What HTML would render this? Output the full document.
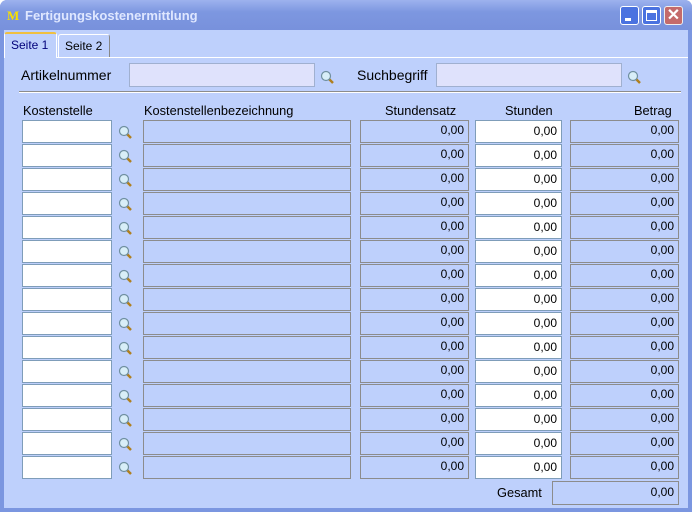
<!DOCTYPE html><html><head><style>
body{margin:0;width:692px;height:512px;overflow:hidden;font-family:"Liberation Sans",sans-serif;font-size:12px;}
.win{position:absolute;left:0;top:0;width:692px;height:512px;background:#7b96e0;border-radius:7px 7px 0 0;}
.title{position:absolute;left:0;top:0;width:692px;height:30px;border-radius:7px 7px 0 0;background:linear-gradient(#9db2ee,#7d97e0 40%,#7891dc);}
.title span{position:absolute;left:25px;top:8px;color:#dfe7ff;font-weight:bold;font-size:13px;}
.logo{position:absolute;left:7px;top:8px;color:#f8e000;font-weight:bold;font-family:"Liberation Serif",serif;font-size:13px;}
.btn{position:absolute;top:6px;width:19px;height:19px;border:1px solid #fff;border-radius:3px;background:#4a72e0;color:#fff;box-sizing:border-box}
.client{position:absolute;left:4px;top:30px;width:684px;height:478px;background:#bed0fc;}
.a{position:absolute;box-sizing:border-box;}
.ro{background:#bed0fc;border:1px solid #8c8c8c;text-align:right;padding:2px 4px 0 0;height:23px}
.wh{background:#fff;border:1px solid #7f9db9;text-align:right;padding:3px 4px 0 0;height:23px}
.in{background:#dfe2fc;border:1px solid #a0b0d0;height:24px}
.lbl{position:absolute;font-size:12.8px;color:#000}
.mg{position:absolute;width:14px;height:14px}
</style></head><body><div class="win">
<div class="title"><b class="logo">M</b><span>Fertigungskostenermittlung</span>
<div class="btn" style="left:620px"><div style="position:absolute;left:4px;top:11px;width:6px;height:3px;background:#fff"></div></div>
<div class="btn" style="left:642px"><div style="position:absolute;left:3px;top:3px;width:11px;height:11px;border:1px solid #fff;border-top-width:3px;box-sizing:border-box"></div></div>
<div class="btn" style="left:664px;background:#c46a6a;border-color:#eee;font-size:16px;line-height:17px;text-align:center;font-weight:bold">✕</div>
</div>
<div class="client"></div>
<div class="a" style="left:4px;top:32px;width:53px;height:26px;background:#bed0fc;border:1px solid #fff;border-bottom:none;border-top:2px solid #f0c040;border-radius:3px 3px 0 0;color:#00007a;padding:4px 0 0 6px">Seite 1</div>
<div class="a" style="left:58px;top:34px;width:52px;height:23px;background:#bed0fc;border:1px solid #fff;border-right-color:#888;border-bottom:none;border-radius:3px 3px 0 0;padding:4px 0 0 6px">Seite 2</div>
<div class="a" style="left:57px;top:57px;width:631px;height:1px;background:#fff"></div>
<div class="lbl" style="left:21px;top:67px;font-size:14px">Artikelnummer</div>
<div class="a in" style="left:129px;top:63px;width:186px"></div>
<div class="lbl" style="left:357px;top:67px;font-size:14px">Suchbegriff</div>
<div class="a in" style="left:436px;top:63px;width:186px"></div>
<div class="a" style="left:19px;top:91px;width:662px;height:2px;background:#8c8c8c;border-bottom:1px solid #fff"></div>
<div class="lbl" style="left:23px;top:103px">Kostenstelle</div>
<div class="lbl" style="left:144px;top:103px">Kostenstellenbezeichnung</div>
<div class="lbl" style="left:385px;top:103px">Stundensatz</div>
<div class="lbl" style="left:505px;top:103px">Stunden</div>
<div class="lbl" style="left:634px;top:103px">Betrag</div>
<div id="rows"></div>
<div class="lbl" style="left:497px;top:485px">Gesamt</div>
<div class="a ro" style="left:552px;top:481px;width:127px;height:24px;padding-top:3px">0,00</div>
</div>
<svg width="0" height="0" style="position:absolute"><defs><g id="m"><line x1="8" y1="8" x2="13" y2="13" stroke="#b08020" stroke-width="2.5"/><circle cx="6" cy="6" r="4.5" fill="#d8eef8" stroke="#7090a0" stroke-width="1.2"/></g></defs></svg>
<script>
var h='';
function mg(x,y){return '<svg class="mg" style="left:'+x+'px;top:'+y+'px" viewBox="0 0 14 14"><use href="#m"/></svg>';}
h+=mg(320,70)+mg(627,70);
for(var i=0;i<15;i++){var y=120+i*24;
h+='<div class="a wh" style="left:22px;top:'+y+'px;width:90px"></div>'+mg(118,y+5);
h+='<div class="a ro" style="left:143px;top:'+y+'px;width:208px"></div>';
h+='<div class="a ro" style="left:360px;top:'+y+'px;width:109px">0,00</div>';
h+='<div class="a wh" style="left:475px;top:'+y+'px;width:87px">0,00</div>';
h+='<div class="a ro" style="left:570px;top:'+y+'px;width:109px">0,00</div>';}
document.getElementById('rows').innerHTML=h;
</script></body></html>
